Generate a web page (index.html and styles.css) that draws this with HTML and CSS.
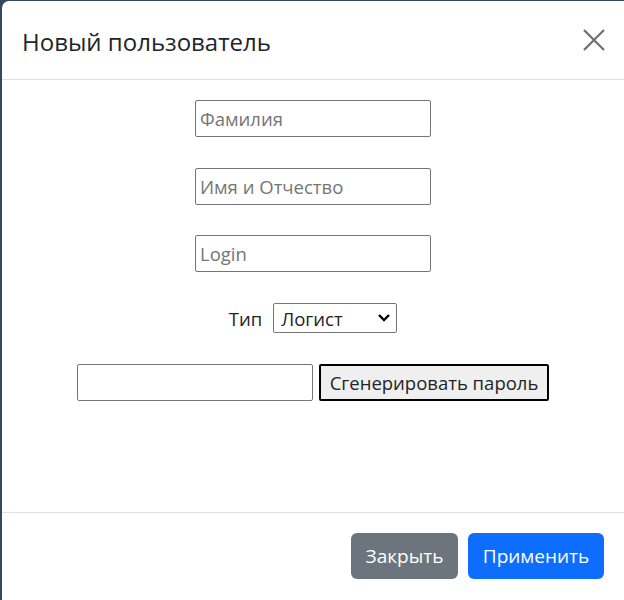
FILE: index.html
```html
<!DOCTYPE html>
<html lang="ru">
<head>
<meta charset="utf-8">
<title>Новый пользователь</title>
<link rel="stylesheet" href="styles.css">
</head>
<body>
<div class="modal">
  <div class="modal-header">
    <h5 class="modal-title">Новый пользователь</h5>
    <button class="btn-close" type="button" aria-label="Close">
      <svg width="22" height="22" viewBox="0 0 22 22"><path d="M1 1 L21 21 M21 1 L1 21" stroke="#6f6f6f" stroke-width="2.2" fill="none"/></svg>
    </button>
  </div>
  <div class="modal-body">
    <input class="field" type="text" placeholder="Фамилия">
    <input class="field" type="text" placeholder="Имя и Отчество">
    <input class="field field-last" type="text" placeholder="Login">
    <div class="type-row">
      <label class="type-label">Тип</label>
      <select class="type-select"><option>Логист</option></select>
    </div>
    <div class="pass-row">
      <input class="field" type="text">
      <button class="gen-btn" type="button">Сгенерировать пароль</button>
    </div>
  </div>
  <div class="modal-footer">
    <button class="btn btn-secondary" type="button">Закрыть</button>
    <button class="btn btn-primary" type="button">Применить</button>
  </div>
</div>
</body>
</html>
```
FILE: styles.css
```css
html, body {
  margin: 0;
  padding: 0;
}
body {
  background: #34495e;
  width: 624px;
  height: 600px;
  overflow: hidden;
  font-family: "Open Sans", "Noto Sans", sans-serif;
  color: #212529;
}
.modal {
  margin: 1px 0 0 2px;
  height: 599px;
  overflow: hidden;
  background: #fff;
  border-top-left-radius: 7px;
  display: flex;
  flex-direction: column;
}
.modal-header {
  height: 78px;
  flex-shrink: 0;
  border-bottom: 1px solid #dee2e6;
  display: flex;
  align-items: center;
  padding: 0 20px 0 20px;
  box-sizing: content-box;
}
.modal-title {
  margin: 0;
  font-size: 24px;
  font-weight: 500;
  flex: 1;
  padding-top: 2px;
}
.btn-close {
  border: 0;
  background: none;
  padding: 0;
  width: 22px;
  height: 22px;
  display: flex;
  margin-right: -1px;
}
.modal-body {
  height: 412px;
  flex-shrink: 0;
  padding-top: 20px;
  display: flex;
  flex-direction: column;
  align-items: center;
}
.field {
  box-sizing: border-box;
  width: 236px;
  height: 37px;
  border: 1px solid #767676;
  border-radius: 2px;
  padding: 0 4px;
  font-family: inherit;
  font-size: 18.5px;
  color: #212529;
  margin: 0 0 31px;
}
.field-last {
  margin-top: -1px;
}
.field::placeholder {
  color: #757575;
}
.type-row {
  display: flex;
  align-items: center;
  gap: 11px;
  margin-top: 0;
  margin-bottom: 31px;
}
.type-label {
  font-size: 18.5px;
}
.type-select {
  appearance: none;
  -webkit-appearance: none;
  box-sizing: border-box;
  width: 124px;
  height: 30px;
  border: 1px solid #767676;
  border-radius: 2px;
  padding: 0 0 0 7px;
  font-family: inherit;
  font-size: 18.5px;
  color: #212529;
  background: #fff url("data:image/svg+xml,%3Csvg xmlns='http://www.w3.org/2000/svg' width='14' height='10' viewBox='0 0 14 10'%3E%3Cpath d='M2 2 L7 7 L12 2' stroke='%23000' stroke-width='2.4' fill='none'/%3E%3C/svg%3E") no-repeat right 5px center;
}
.pass-row {
  display: flex;
  gap: 6px;
}
.pass-row .field {
  margin: 0;
}
.gen-btn {
  box-sizing: border-box;
  width: 230px;
  height: 37px;
  border: 2px solid #000;
  border-radius: 2px;
  background: #efefef;
  font-family: inherit;
  font-size: 18.5px;
  color: #212529;
  padding: 0;
}
.modal-footer {
  border-top: 1px solid #dee2e6;
  display: flex;
  justify-content: flex-end;
  gap: 10px;
  padding: 20px 20px 0 0;
}
.btn {
  height: 46px;
  border: 0;
  border-radius: 6px;
  color: #fff;
  font-family: inherit;
  font-size: 19px;
  padding: 0;
}
.btn-secondary {
  width: 107px;
  background: #6c757d;
}
.btn-primary {
  width: 136px;
  background: #0d6efd;
}
```
